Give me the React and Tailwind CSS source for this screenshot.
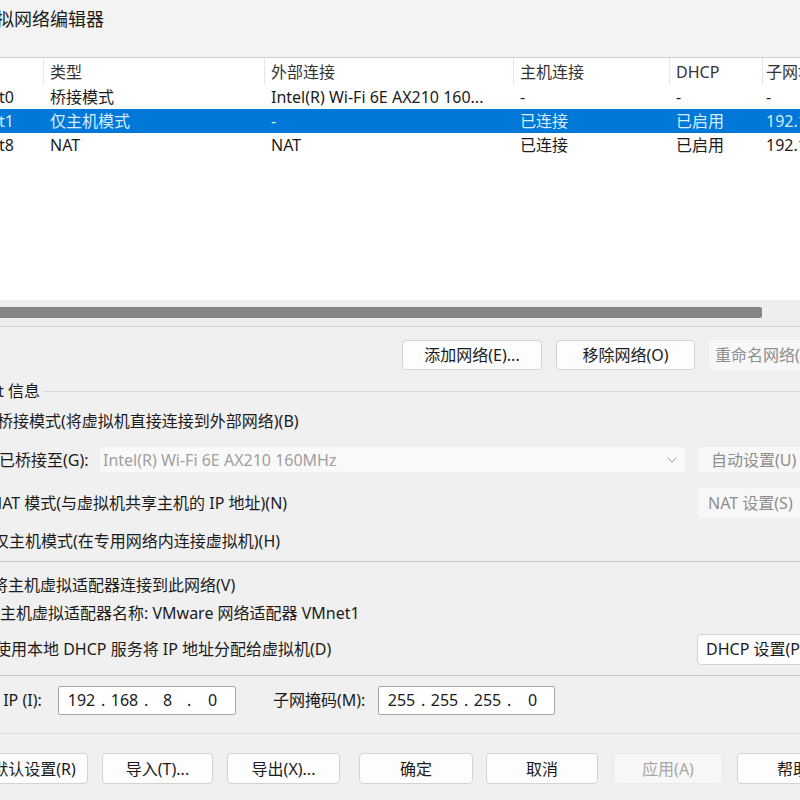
import React from "react";

const rows = [
  { name: "VMnet0", type: "桥接模式", ext: "Intel(R) Wi-Fi 6E AX210 160...", host: "-", dhcp: "-", sub: "-" },
  { name: "VMnet1", type: "仅主机模式", ext: "-", host: "已连接", dhcp: "已启用", sub: "192.168.8.0", sel: true },
  { name: "VMnet8", type: "NAT", ext: "NAT", host: "已连接", dhcp: "已启用", sub: "192.168.80.0" },
];

function Btn({ children, className = "" }) {
  return (
    <div className={"shrink-0 flex items-center justify-center rounded-[4px] border border-[#d3d3d3] bg-[#fdfdfd] text-[#1b1b1b] " + className}>
      {children}
    </div>
  );
}

function DisBtn({ children, className = "" }) {
  return (
    <div className={"shrink-0 flex items-center rounded-[4px] bg-[#f7f7f7] text-[#8e8e8e] " + className}>
      {children}
    </div>
  );
}

function IpBox({ parts, className = "" }) {
  return (
    <div className={"shrink-0 h-[29px] bg-white border border-[#a8a8a8] rounded-[2px] flex items-center pl-[3px] " + className}>
      {parts.map((p, i) => (
        <div key={i} className="w-[43px] flex items-center">
          <span className="flex-1 text-center">{p}</span>
          {i < 3 ? <span className="w-[4px] text-center">.</span> : null}
        </div>
      ))}
    </div>
  );
}

export default function App() {
  return (
    <div className="w-[800px] h-[800px] overflow-hidden bg-[#f0f0f0] text-[16px] leading-none text-[#1b1b1b] font-['Noto_Sans','Noto_Sans_CJK_SC',sans-serif]">
      {/* Title bar */}
      <div className="h-[58px] bg-[#f3f3f3] border-b border-[#cdcdcd] flex items-start overflow-hidden">
        <span className="-ml-[22px] mt-[8px] text-[18px] leading-[22px] whitespace-nowrap">虚拟网络编辑器</span>
      </div>

      {/* List */}
      <div className="h-[242px] bg-white overflow-hidden">
        <div className="-ml-[60px] w-[1100px] grid grid-cols-[103px_221px_249px_156px_93px_200px] h-[27px] text-[#333]">
          <div className="flex items-center pl-[7px]">名称</div>
          <div className="flex items-center pl-[6px] border-l border-[#e6e6e6]">类型</div>
          <div className="flex items-center pl-[6px] border-l border-[#e6e6e6]">外部连接</div>
          <div className="flex items-center pl-[6px] border-l border-[#e6e6e6]">主机连接</div>
          <div className="flex items-center pl-[6px] border-l border-[#e6e6e6]">DHCP</div>
          <div className="flex items-center pl-[3px] border-l border-[#e6e6e6]">子网地址</div>
        </div>
        {rows.map((r) => (
          <div
            key={r.name}
            className={
              "-ml-[60px] w-[1100px] grid grid-cols-[103px_221px_249px_156px_93px_200px] h-[24px] items-center whitespace-nowrap " +
              (r.sel ? "bg-[#0078d7] text-[#d9ecff]" : "")
            }
          >
            <div className="pl-[16px]">{r.name}</div>
            <div className="pl-[7px]">{r.type}</div>
            <div className="pl-[7px]">{r.ext}</div>
            <div className="pl-[7px]">{r.host}</div>
            <div className="pl-[7px]">{r.dhcp}</div>
            <div className="pl-[4px]">{r.sub}</div>
          </div>
        ))}
      </div>

      {/* Horizontal scrollbar */}
      <div className="h-[27px] bg-[#eeeeee] border-b border-[#d4d4d4] pt-[7px]">
        <div className="h-[11px] w-[762px] bg-[#868686] rounded-r-[2px]" />
      </div>

      {/* Network buttons */}
      <div className="h-[54px] pt-[13px] flex pl-[402px] gap-[14px] whitespace-nowrap">
        <Btn className="w-[140px] h-[30px]">添加网络(E)...</Btn>
        <Btn className="w-[139px] h-[30px]">移除网络(O)</Btn>
        <DisBtn className="w-[140px] h-[30px] pl-[6px]">重命名网络(W)...</DisBtn>
      </div>

      {/* Group label */}
      <div className="h-[20px] flex items-center whitespace-nowrap">
        <span className="-ml-[45px] shrink-0">VMnet 信息</span>
        <div className="flex-1 h-px bg-[#dadada] ml-[3px]" />
      </div>

      {/* Bridged */}
      <div className="h-[40px] flex items-center whitespace-nowrap">
        <span className="-ml-[3px]">桥接模式(将虚拟机直接连接到外部网络)(B)</span>
      </div>
      <div className="h-[37px] flex items-center whitespace-nowrap">
        <span className="-ml-[1px] w-[101px] shrink-0">已桥接至(G):</span>
        <div className="w-[585px] h-[25px] shrink-0 bg-[#f9f9f9] rounded-[3px] flex items-center pl-[3px] pr-[8px] text-[#a0a0a0]">
          <span className="flex-1">Intel(R) Wi-Fi 6E AX210 160MHz</span>
          <svg width="10" height="6" viewBox="0 0 10 6" className="shrink-0">
            <path d="M0.5 0.5 L5 5 L9.5 0.5" fill="none" stroke="#a8a8a8" strokeWidth="1" />
          </svg>
        </div>
        <DisBtn className="ml-[13px] w-[120px] h-[25px] pl-[13px]">自动设置(U)</DisBtn>
      </div>
      <div className="h-[50px] flex items-center whitespace-nowrap">
        <span className="-ml-[10px] w-[708px] shrink-0">NAT 模式(与虚拟机共享主机的 IP 地址)(N)</span>
        <DisBtn className="w-[120px] h-[30px] pl-[10px]">NAT 设置(S)</DisBtn>
      </div>
      <div className="h-[26px] flex items-center whitespace-nowrap">
        <span className="-ml-[7px]">仅主机模式(在专用网络内连接虚拟机)(H)</span>
      </div>
      <div className="h-[7px]" />
      <div className="h-px bg-[#c9c9c9]" />

      {/* Adapter / DHCP */}
      <div className="h-[9px]" />
      <div className="h-[28px] flex items-center whitespace-nowrap">
        <span className="-ml-[8px]">将主机虚拟适配器连接到此网络(V)</span>
      </div>
      <div className="h-[28px] flex items-center whitespace-nowrap">
        <span>主机虚拟适配器名称: VMware 网络适配器 VMnet1</span>
      </div>
      <div className="h-[44px] flex items-center whitespace-nowrap">
        <span className="-ml-[5px] w-[702px] shrink-0">使用本地 DHCP 服务将 IP 地址分配给虚拟机(D)</span>
        <Btn className="w-[120px] h-[31px] justify-start pl-[8px]">DHCP 设置(P)</Btn>
      </div>
      <div className="h-[4px]" />
      <div className="h-px bg-[#c9c9c9]" />

      {/* IP row */}
      <div className="h-[48px] flex items-center whitespace-nowrap">
        <span className="-ml-[33px] w-[91px] shrink-0">子网 IP (I):</span>
        <IpBox parts={["192", "168", "8", "0"]} className="w-[178px]" />
        <span className="ml-[37px] w-[105px] shrink-0">子网掩码(M):</span>
        <IpBox parts={["255", "255", "255", "0"]} className="w-[177px]" />
      </div>
      <div className="h-[9px]" />
      <div className="h-px bg-[#dedede]" />

      {/* Bottom buttons */}
      <div className="pt-[19px] flex whitespace-nowrap">
        <Btn className="-ml-[52px] w-[140px] h-[31px]">还原默认设置(R)</Btn>
        <Btn className="ml-[14px] w-[111px] h-[31px]">导入(T)...</Btn>
        <Btn className="ml-[14px] w-[113px] h-[31px]">导出(X)...</Btn>
        <Btn className="ml-[19px] w-[114px] h-[31px] border-[#4f93dc]">确定</Btn>
        <Btn className="ml-[13px] w-[112px] h-[31px]">取消</Btn>
        <DisBtn className="ml-[15px] w-[110px] h-[31px] justify-center text-[#a6a6a6] border border-[#ebebeb]">应用(A)</DisBtn>
        <Btn className="ml-[14px] w-[112px] h-[31px]">帮助</Btn>
      </div>
    </div>
  );
}
